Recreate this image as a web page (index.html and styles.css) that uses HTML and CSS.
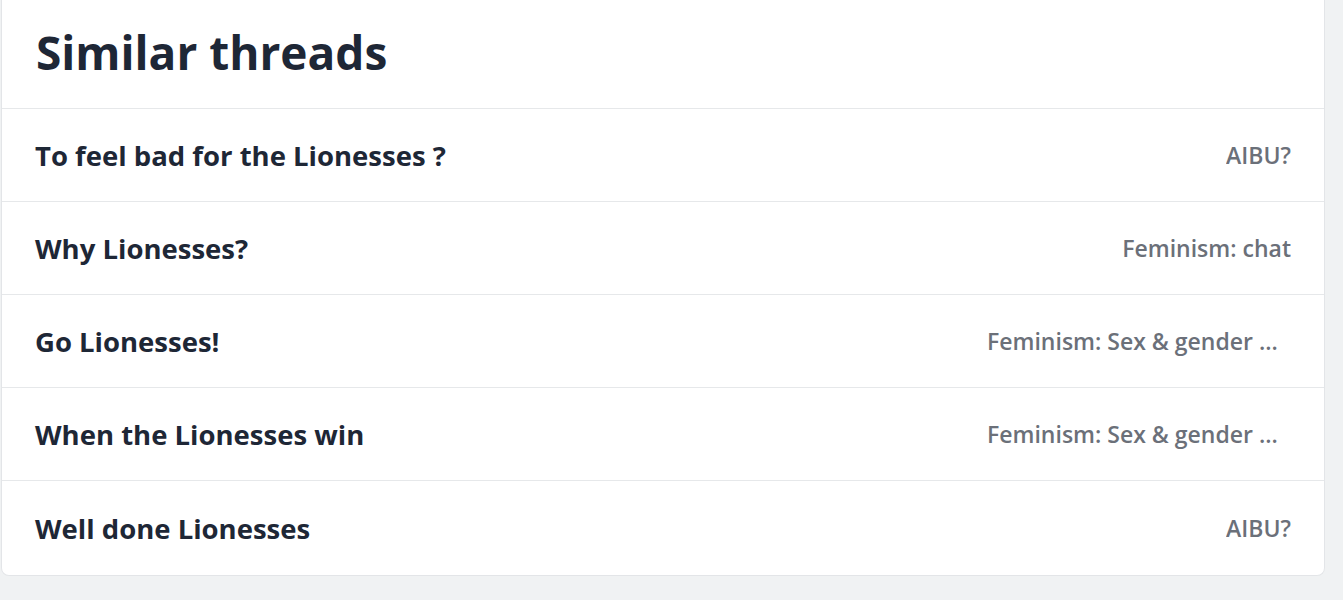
FILE: index.html
```html
<!DOCTYPE html>
<html lang="en">
<head>
    <meta charset="UTF-8">
    <title>Similar threads</title>
    <link rel="stylesheet" href="styles.css">
</head>
<body>
    <div class="card">
        <h2 class="card-title">Similar threads</h2>
        <ul class="thread-list">
            <li class="thread-row">
                <a class="thread-title" href="#">To feel bad for the Lionesses ?</a>
                <span class="thread-topic">AIBU?</span>
            </li>
            <li class="thread-row">
                <a class="thread-title" href="#">Why Lionesses?</a>
                <span class="thread-topic">Feminism: chat</span>
            </li>
            <li class="thread-row">
                <a class="thread-title" href="#">Go Lionesses!</a>
                <span class="thread-topic">Feminism: Sex &amp; gender discussions</span>
            </li>
            <li class="thread-row">
                <a class="thread-title" href="#">When the Lionesses win</a>
                <span class="thread-topic">Feminism: Sex &amp; gender discussions</span>
            </li>
            <li class="thread-row">
                <a class="thread-title" href="#">Well done Lionesses</a>
                <span class="thread-topic">AIBU?</span>
            </li>
        </ul>
    </div>
</body>
</html>
```

FILE: styles.css
```css
body {
    margin: 0;
    background: #f0f2f3;
    font-family: "Open Sans", "Noto Sans", sans-serif;
    color: #1e2736;
}
.card {
    width: 1322px;
    margin-left: 1px;
    background: #fff;
    border: 1px solid #e3e5e8;
    border-top: none;
    border-radius: 0 0 8px 8px;
}
.card-title {
    margin: 0;
    padding: 21px 34px 25px;
    font-size: 46px;
    font-weight: 700;
    line-height: 62px;
    border-bottom: 1px solid #e6e8ea;
}
.thread-list {
    list-style: none;
    margin: 0;
    padding: 0;
}
.thread-row {
    display: flex;
    align-items: center;
    justify-content: space-between;
    gap: 40px;
    height: 92px;
    padding: 0 33px;
    border-bottom: 1px solid #e6e8ea;
}
.thread-row:last-child {
    height: 94px;
    border-bottom: none;
}
.thread-title {
    font-size: 27.5px;
    font-weight: 700;
    color: #1e2736;
    text-decoration: none;
    white-space: nowrap;
}
/* long forum names get cut with an ellipsis */
.thread-topic {
    max-width: 304px;
    font-size: 23px;
    font-weight: 600;
    color: #6b7079;
    white-space: nowrap;
    overflow: hidden;
    text-overflow: ellipsis;
}
```
